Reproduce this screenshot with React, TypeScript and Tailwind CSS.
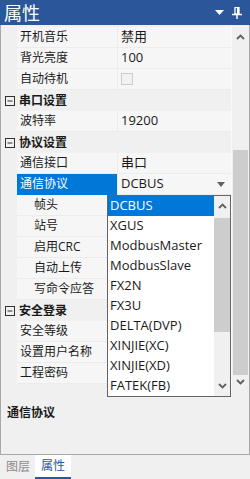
import React from 'react';

type Row =
  | { kind: 'cat'; name: string }
  | { kind: 'prop'; name: string; value?: string; indent?: boolean; check?: boolean; selected?: boolean };

const rows: Row[] = [
  { kind: 'prop', name: '开机音乐', value: '禁用' },
  { kind: 'prop', name: '背光亮度', value: '100' },
  { kind: 'prop', name: '自动待机', check: true },
  { kind: 'cat', name: '串口设置' },
  { kind: 'prop', name: '波特率', value: '19200' },
  { kind: 'cat', name: '协议设置' },
  { kind: 'prop', name: '通信接口', value: '串口' },
  { kind: 'prop', name: '通信协议', value: 'DCBUS', selected: true },
  { kind: 'prop', name: '帧头', indent: true },
  { kind: 'prop', name: '站号', indent: true },
  { kind: 'prop', name: '启用CRC', indent: true },
  { kind: 'prop', name: '自动上传', indent: true },
  { kind: 'prop', name: '写命令应答', indent: true },
  { kind: 'cat', name: '安全登录' },
  { kind: 'prop', name: '安全等级' },
  { kind: 'prop', name: '设置用户名称' },
  { kind: 'prop', name: '工程密码' },
];

const options = ['DCBUS', 'XGUS', 'ModbusMaster', 'ModbusSlave', 'FX2N', 'FX3U', 'DELTA(DVP)', 'XINJIE(XC)', 'XINJIE(XD)', 'FATEK(FB)'];

const font = { fontFamily: '"Open Sans", "Noto Sans CJK SC", sans-serif' };

const Chevron = ({ up }: { up?: boolean }) => (
  <svg width="9" height="6" viewBox="0 0 9 6">
    <polyline
      points={up ? '1,5 4.5,1.5 8,5' : '1,1 4.5,4.5 8,1'}
      fill="none"
      stroke="#606060"
      strokeWidth="1.8"
    />
  </svg>
);

const Minus = () => (
  <svg width="10" height="10" viewBox="0 0 10 10">
    <rect x="0.5" y="0.5" width="9" height="9" fill="none" stroke="#303030" strokeWidth="1" />
    <line x1="2.5" y1="5" x2="7.5" y2="5" stroke="#303030" strokeWidth="1" />
  </svg>
);

export default function App() {
  return (
    <div className="w-[250px] h-[479px] flex flex-col bg-[#f0f0f0] text-[#1a1a1a] overflow-hidden" style={font}>
      {/* title bar */}
      <div className="h-[25px] bg-[#2b579a] flex items-center justify-between pl-[4px] pr-[8px]">
        <span className="text-[18px] text-white leading-none">属性</span>
        <div className="flex items-center gap-[8px]">
          <svg width="9" height="5" viewBox="0 0 9 5">
            <polygon points="0,0 9,0 4.5,5" fill="#fff" />
          </svg>
          <svg width="10" height="12" viewBox="0 0 10 12">
            <rect x="3" y="0.5" width="4" height="6.5" fill="none" stroke="#fff" strokeWidth="1.3" />
            <rect x="5" y="0.5" width="2" height="6.5" fill="#fff" />
            <line x1="0" y1="7.5" x2="10" y2="7.5" stroke="#fff" strokeWidth="1.5" />
            <line x1="5" y1="7.5" x2="5" y2="12" stroke="#fff" strokeWidth="1.5" />
          </svg>
        </div>
      </div>

      {/* grid + description */}
      <div className="flex-1 flex flex-col border-x border-[#a8a8a8] relative">
        <div className="h-[368px] flex">
          <div className="flex-1 pt-[2px] border-r border-[#fafafa]">
            {rows.map((r, i) =>
              r.kind === 'cat' ? (
                <div key={i} className="h-[21px] flex items-center bg-[#f0f0f0]">
                  <div className="w-[16px] flex justify-center pl-[1px]">
                    <Minus />
                  </div>
                  <span className="text-[12px] font-bold pl-[2px]">{r.name}</span>
                </div>
              ) : (
                <div key={i} className="h-[21px] flex bg-[#f0f0f0]">
                  <div className="w-[16px]" />
                  <div
                    className={`w-[100px] flex items-center text-[12px] border-b ${
                      r.selected ? 'bg-[#0078d7] text-white border-[#0078d7]' : 'bg-[#f6f6f6] border-[#ececec]'
                    } ${r.indent ? 'pl-[17px]' : 'pl-[3px]'}`}
                  >
                    {r.name}
                  </div>
                  <div className="flex-1 flex items-center justify-between pl-[3px] pr-[6px] bg-[#f6f6f6] border-b border-l border-[#ececec] text-[13px]">
                    {r.check ? (
                      <div className="w-[12px] h-[12px] border border-[#cccccc] bg-[#f2f2f2]" />
                    ) : (
                      <span>{r.value}</span>
                    )}
                    {r.selected && (
                      <svg width="8" height="5" viewBox="0 0 8 5">
                        <polygon points="0,0 8,0 4,5" fill="#606060" />
                      </svg>
                    )}
                  </div>
                </div>
              )
            )}
          </div>
          {/* outer scrollbar */}
          <div className="w-[17px] flex flex-col bg-[#f0f0f0] pt-[2px]">
            <div className="h-[20px] flex items-center justify-center">
              <Chevron up />
            </div>
            <div className="h-[103px]" />
            <div className="h-[225px] mx-[1px] bg-[#cdcdcd]" />
            <div className="flex-1 flex items-start justify-center pt-[4px]">
              <Chevron />
            </div>
          </div>
        </div>

        <div className="flex-1 border-b border-[#a8a8a8] px-[6px] pt-[6px]">
          <span className="text-[12px] font-bold">通信协议</span>
        </div>

        {/* dropdown list */}
        <div className="absolute left-[106px] top-[170px] w-[124px] h-[202px] border border-[#646464] bg-white flex">
          <div className="flex-1 flex flex-col">
            {options.map((o, i) => (
              <div
                key={o}
                className={`h-[20px] flex items-center pl-[2px] text-[13px] ${i === 0 ? 'bg-[#0078d7] text-white' : ''}`}
              >
                {o}
              </div>
            ))}
          </div>
          <div className="w-[16px] flex flex-col bg-[#f0f0f0]">
            <div className="h-[20px] flex items-center justify-center">
              <Chevron up />
            </div>
            <div className="h-[2px]" />
            <div className="h-[114px] bg-[#cdcdcd]" />
            <div className="flex-1" />
            <div className="h-[20px] flex items-center justify-center">
              <Chevron />
            </div>
          </div>
        </div>
      </div>

      {/* tabs */}
      <div className="h-[24px] flex items-stretch pl-[1px]">
        <div className="w-[34px] flex items-center justify-center text-[12px] text-[#8a8a8a]">图层</div>
        <div className="w-[36px] flex flex-col bg-white">
          <div className="flex-1 flex items-center justify-center text-[12px] text-[#2b579a]">属性</div>
          <div className="h-[2px] bg-[#2b579a]" />
        </div>
      </div>
    </div>
  );
}
